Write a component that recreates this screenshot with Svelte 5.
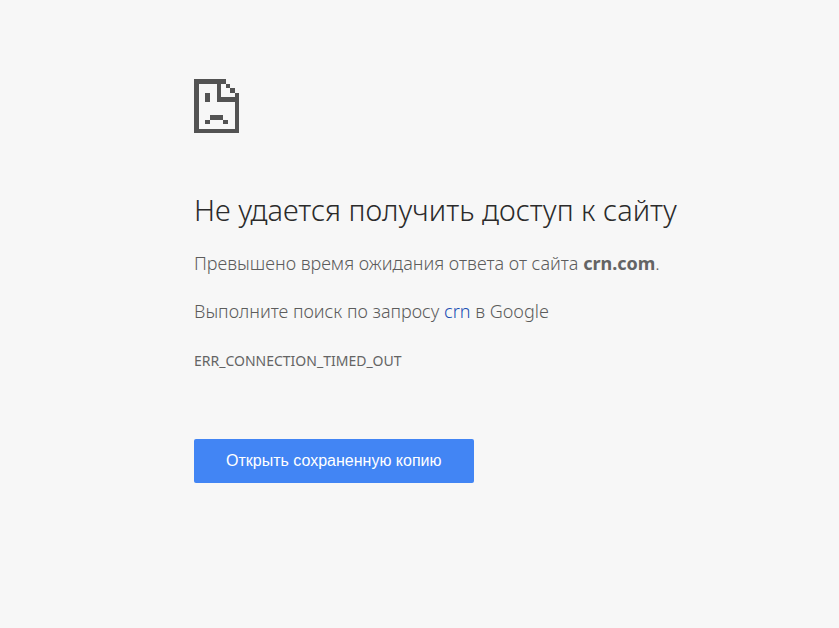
<script>
    const host = 'crn.com';
    const query = 'crn';
    const errorCode = 'ERR_CONNECTION_TIMED_OUT';
    const searchUrl = `https://www.google.com/search?q=${query}`;
    const cacheUrl = `https://webcache.googleusercontent.com/search?q=cache:${host}`;

    function openCachedCopy() {
        window.location.href = cacheUrl;
    }
</script>

<svelte:head>
    <title>{host}</title>
</svelte:head>

<main class="error-page">
    <svg class="icon" viewBox="0 0 20 24" shape-rendering="crispEdges" aria-hidden="true">
        <path d="M0 0h14v2H2v20h16V10h2v14H0z M10 2h2v6h6V6h2v4H10z M14 2h2v2h-2z M16 4h2v2h-2z M5 6h2v4H5z M7 16h6v2H7z M5 18h2v2H5z M13 18h2v2h-2z" />
    </svg>

    <h1>Не удается получить доступ к сайту</h1>
    <p>Превышено время ожидания ответа от сайта <strong>{host}</strong>.</p>
    <p>Выполните поиск по запросу <a href={searchUrl}>{query}</a> в Google</p>
    <div class="error-code">{errorCode}</div>

    <button type="button" on:click={openCachedCopy}>Открыть сохраненную копию</button>
</main>

<style>
    :global(body) {
        margin: 0;
        background: #f7f7f7;
    }

    .error-page {
        padding: 79px 24px 24px 194px;
        color: #5c5c5c;
        font-family: 'Noto Sans', sans-serif;
        font-size: 18px;
        font-weight: 350;
        line-height: 28px;
    }

    .icon {
        display: block;
        width: 45px;
        height: 54px;
        fill: #535353;
    }

    h1 {
        margin: 55px 0 17px;
        color: #2b2b2b;
        font-size: 29px;
        font-weight: 350;
        line-height: 44px;
    }

    p {
        margin: 0 0 20px;
    }

    strong {
        color: #646464;
    }

    a {
        color: #1a4fb4;
        text-decoration: none;
    }

    .error-code {
        margin-top: 22px;
        color: #646464;
        font-size: 14px;
        font-weight: 400;
    }

    button {
        height: 44px;
        margin-top: 64px;
        padding: 0 32px;
        border: 0;
        border-radius: 2px;
        background: #4285f4;
        color: #fff;
        font-family: 'Liberation Sans', Arial, sans-serif;
        font-size: 16px;
        cursor: pointer;
    }
</style>
